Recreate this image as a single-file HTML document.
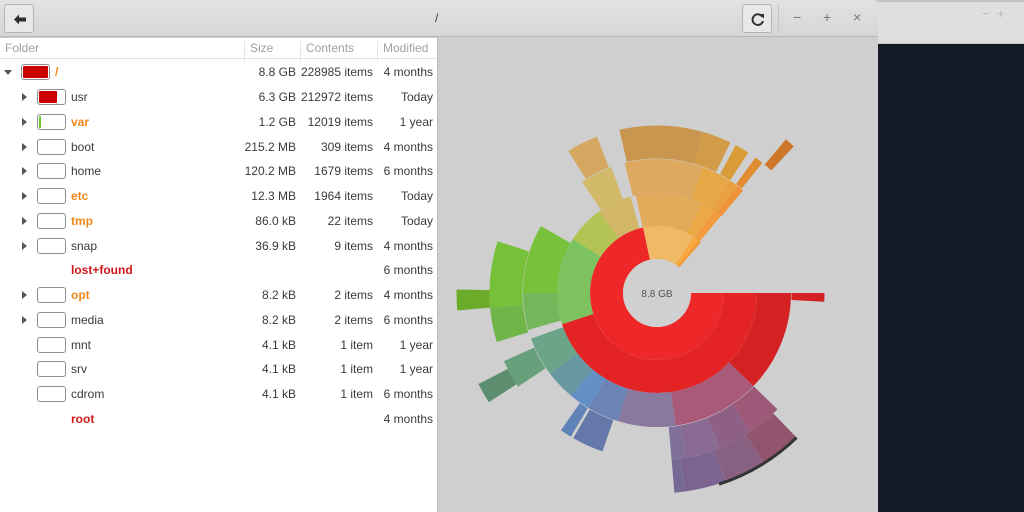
<!DOCTYPE html>
<html><head><meta charset="utf-8"><style>
*{margin:0;padding:0;box-sizing:border-box}
body{width:1024px;height:512px;overflow:hidden;background:#141a26;font-family:"Liberation Sans","DejaVu Sans",sans-serif;position:relative}
#bgwin{position:absolute;left:878px;top:0;width:146px;height:44px;background:#dfdfdf;border-bottom:1px solid #c8c8c8;border-top:2px solid #c4c4c4}
#win{position:absolute;left:0;top:0;width:878px;height:512px;background:#cfcfcf}
#hdr{position:absolute;left:0;top:0;width:878px;height:37px;background:linear-gradient(#e2e2e2,#d6d6d6);border-bottom:1px solid #b8b8b8;border-top-right-radius:6px}
.btn{position:absolute;top:4px;width:30px;height:29px;border:1px solid #b4b4b4;border-radius:3px;background:#e8e8e8}
#left{position:absolute;left:0;top:38px;width:438px;height:474px;background:#fff;border-right:1px solid #bdbdbd}
#th{position:absolute;left:0;top:0;width:437px;height:21px;border-bottom:1px solid #e2e2e2;color:#a0a0a0;font-size:12px}
#th div{position:absolute;top:3px}
.sep{position:absolute;top:0;width:1px;height:21px;background:#e4e4e4}
.row{position:absolute;left:0;width:437px;height:24px;font-size:12px;color:#3a3a3a}
.row span{position:absolute;top:5px;white-space:nowrap}
.tri{position:absolute;width:0;height:0}
.box{position:absolute;top:4px;width:29px;height:16px;border:1px solid #8e8e8e;border-radius:3px;background:#fff;overflow:hidden}
.fill{position:absolute;left:1px;top:1px;bottom:1px;background:#cc0000;border-radius:1px}
.o{color:#f0891a;font-weight:bold}.r{color:#d01818;font-weight:bold}
.s{right:141px}.c{right:64px}.m{right:4px}
</style></head><body>
<div id="bgwin"><span style="position:absolute;left:104px;top:4px;color:#bbb;font-size:13px">−&nbsp;&nbsp;+</span></div>
<div id="win">
<div id="hdr">
 <div class="btn" style="left:4px"><svg width="30" height="29"><path d="M9 14.5 L14 9.5 V12.5 H21 V16.5 H14 V19.5 Z" fill="#2e2e2e"/></svg></div>
 <div style="position:absolute;left:435px;top:11px;font-size:12px;color:#333">/</div>
 <div class="btn" style="left:742px"><svg width="30" height="29"><path d="M19.5 12 A5.3 5.3 0 1 0 20 16" fill="none" stroke="#333" stroke-width="2"/><path d="M16.5 9 L21 9 L21 13.5 Z" fill="#333"/></svg></div>
 <div style="position:absolute;left:778px;top:5px;width:1px;height:28px;background:#c4c4c4"></div>
 <div style="position:absolute;left:793px;top:9px;font-size:14px;color:#777">−</div>
 <div style="position:absolute;left:823px;top:9px;font-size:14px;color:#777">+</div>
 <div style="position:absolute;left:853px;top:9px;font-size:14px;color:#777">×</div>
</div>
<div id="left">
 <div id="th"><div style="left:5px">Folder</div><div class="sep" style="left:244px"></div><div style="left:250px">Size</div><div class="sep" style="left:300px"></div><div style="left:306px">Contents</div><div class="sep" style="left:377px"></div><div style="left:383px">Modified</div></div>
</div>
<div id="rows" style="position:absolute;left:0;top:0"></div>
<svg style="position:absolute;left:438px;top:38px" width="439" height="474" viewBox="438 38 439 474">
<g fill="none" transform="translate(657 293)">
<!-- ring1 -->
<circle r="50.5" stroke-width="33" pathLength="360" stroke="#ee2828" stroke-dasharray="258 360" stroke-dashoffset="0"/>
<circle r="50.5" stroke-width="33" pathLength="360" stroke="#efb966" stroke-dasharray="45 360" stroke-dashoffset="-258"/>
<circle r="50.5" stroke-width="33" pathLength="360" stroke="#f8aa40" stroke-dasharray="5 360" stroke-dashoffset="-303"/>
<circle r="50.5" stroke-width="33" pathLength="360" stroke="#f29a3a" stroke-dasharray="3 360" stroke-dashoffset="-308"/>
<!-- ring2 -->
<circle r="83.5" stroke-width="33" pathLength="360" stroke="#e42424" stroke-dasharray="162 360" stroke-dashoffset="0"/>
<circle r="83.5" stroke-width="33" pathLength="360" stroke="#7cc25f" stroke-dasharray="51 360" stroke-dashoffset="-162"/>
<circle r="83.5" stroke-width="33" pathLength="360" stroke="#b3c455" stroke-dasharray="22 360" stroke-dashoffset="-213"/>
<circle r="83.5" stroke-width="33" pathLength="360" stroke="#d2b768" stroke-dasharray="20 360" stroke-dashoffset="-235"/>
<circle r="83.5" stroke-width="33" pathLength="360" stroke="#e2ab5c" stroke-dasharray="39 360" stroke-dashoffset="-258"/>
<circle r="83.5" stroke-width="33" pathLength="360" stroke="#eba845" stroke-dasharray="8 360" stroke-dashoffset="-297"/>
<circle r="83.5" stroke-width="33" pathLength="360" stroke="#f39a3a" stroke-dasharray="5 360" stroke-dashoffset="-305"/>
<!-- ring3 -->
<circle r="117" stroke-width="34" pathLength="360" stroke="#d42222" stroke-dasharray="44 360" stroke-dashoffset="0"/>
<circle r="117" stroke-width="34" pathLength="360" stroke="#a85a78" stroke-dasharray="38 360" stroke-dashoffset="-44"/>
<circle r="117" stroke-width="34" pathLength="360" stroke="#89799e" stroke-dasharray="25 360" stroke-dashoffset="-82"/>
<circle r="117" stroke-width="34" pathLength="360" stroke="#6c83b5" stroke-dasharray="14 360" stroke-dashoffset="-107"/>
<circle r="117" stroke-width="34" pathLength="360" stroke="#6390c4" stroke-dasharray="9 360" stroke-dashoffset="-121"/>
<circle r="117" stroke-width="34" pathLength="360" stroke="#6998a3" stroke-dasharray="13 360" stroke-dashoffset="-130"/>
<circle r="117" stroke-width="34" pathLength="360" stroke="#6aa58a" stroke-dasharray="17 360" stroke-dashoffset="-143"/>
<circle r="117" stroke-width="34" pathLength="360" stroke="#72b85a" stroke-dasharray="16 360" stroke-dashoffset="-164"/>
<circle r="117" stroke-width="34" pathLength="360" stroke="#78c13a" stroke-dasharray="30 360" stroke-dashoffset="-180"/>
<circle r="117" stroke-width="34" pathLength="360" stroke="#d3b96a" stroke-dasharray="14 360" stroke-dashoffset="-236"/>
<circle r="117" stroke-width="34" pathLength="360" stroke="#dda860" stroke-dasharray="34 360" stroke-dashoffset="-256"/>
<circle r="117" stroke-width="34" pathLength="360" stroke="#e8a848" stroke-dasharray="13 360" stroke-dashoffset="-290"/>
<circle r="117" stroke-width="34" pathLength="360" stroke="#eaa040" stroke-dasharray="4 360" stroke-dashoffset="-303"/>
<circle r="117" stroke-width="34" pathLength="360" stroke="#f09238" stroke-dasharray="3 360" stroke-dashoffset="-307"/>
<!-- ring4 -->
<circle r="151" stroke-width="33" pathLength="360" stroke="#d42222" stroke-dasharray="3 360" stroke-dashoffset="0"/>
<circle r="151" stroke-width="33" pathLength="360" stroke="#9c5a78" stroke-dasharray="12 360" stroke-dashoffset="-44"/>
<circle r="151" stroke-width="33" pathLength="360" stroke="#8e6086" stroke-dasharray="12 360" stroke-dashoffset="-56"/>
<circle r="151" stroke-width="33" pathLength="360" stroke="#886a92" stroke-dasharray="12 360" stroke-dashoffset="-68"/>
<circle r="151" stroke-width="33" pathLength="360" stroke="#7e7098" stroke-dasharray="5 360" stroke-dashoffset="-80"/>
<circle r="151" stroke-width="33" pathLength="360" stroke="#6478aa" stroke-dasharray="11 360" stroke-dashoffset="-109"/>
<circle r="151" stroke-width="33" pathLength="360" stroke="#5f82b8" stroke-dasharray="4 360" stroke-dashoffset="-121"/>
<circle r="151" stroke-width="33" pathLength="360" stroke="#68a07c" stroke-dasharray="10 360" stroke-dashoffset="-146"/>
<circle r="151" stroke-width="33" pathLength="360" stroke="#6fb548" stroke-dasharray="12 360" stroke-dashoffset="-163"/>
<circle r="151" stroke-width="33" pathLength="360" stroke="#76c03a" stroke-dasharray="23 360" stroke-dashoffset="-175"/>
<circle r="151" stroke-width="33" pathLength="360" stroke="#d4a860" stroke-dasharray="11 360" stroke-dashoffset="-238"/>
<circle r="151" stroke-width="33" pathLength="360" stroke="#c99650" stroke-dasharray="29 360" stroke-dashoffset="-257"/>
<circle r="151" stroke-width="33" pathLength="360" stroke="#d29b48" stroke-dasharray="10 360" stroke-dashoffset="-286"/>
<circle r="151" stroke-width="33" pathLength="360" stroke="#d99a38" stroke-dasharray="5 360" stroke-dashoffset="-298"/>
<circle r="151" stroke-width="33" pathLength="360" stroke="#e08c30" stroke-dasharray="3 360" stroke-dashoffset="-306"/>
<!-- ring5 -->
<circle r="184" stroke-width="33" pathLength="360" stroke="#915570" stroke-dasharray="12 360" stroke-dashoffset="-46"/>
<circle r="184" stroke-width="33" pathLength="360" stroke="#876082" stroke-dasharray="12 360" stroke-dashoffset="-58"/>
<circle r="184" stroke-width="33" pathLength="360" stroke="#7c6490" stroke-dasharray="12 360" stroke-dashoffset="-70"/>
<circle r="184" stroke-width="33" pathLength="360" stroke="#756a96" stroke-dasharray="3 360" stroke-dashoffset="-82"/>
<circle r="184" stroke-width="33" pathLength="360" stroke="#5e8e70" stroke-dasharray="6 360" stroke-dashoffset="-147"/>
<circle r="184" stroke-width="33" pathLength="360" stroke="#6aab2a" stroke-dasharray="6 360" stroke-dashoffset="-175"/>
<circle r="184" stroke-width="33" pathLength="360" stroke="#cc7828" stroke-dasharray="3 360" stroke-dashoffset="-310"/>
<circle r="201" stroke-width="3" pathLength="360" stroke="#333" stroke-dasharray="26 360" stroke-dashoffset="-46"/>
</g>
<circle cx="657" cy="293" r="34" fill="#d0d0d0"/>
<text x="657" y="297" font-size="10" fill="#555" text-anchor="middle" font-family="Liberation Sans, sans-serif">8.8 GB</text>
</svg>
</div>
<div style="position:absolute;left:0;top:0;width:438px">
 <div class="row" style="top:60px"><div class="tri" style="left:4px;top:10px;border-left:4px solid transparent;border-right:4px solid transparent;border-top:5px solid #555"></div><div class="box" style="left:21px"><div class="fill" style="right:1px"></div></div><span class="o" style="left:55px">/</span><span class="s">8.8 GB</span><span class="c">228985 items</span><span class="m">4 months</span></div>
</div>
<div id="tbl" style="position:absolute;left:0;top:0;width:438px"></div>
<script>
var d=[["usr","",1,"6.3 GB","212972 items","Today",70,"#cc0000"],["var","o",1,"1.2 GB","12019 items","1 year",8,"#6cc020"],["boot","",1,"215.2 MB","309 items","4 months",0],["home","",1,"120.2 MB","1679 items","6 months",0],["etc","o",1,"12.3 MB","1964 items","Today",0],["tmp","o",1,"86.0 kB","22 items","Today",0],["snap","",1,"36.9 kB","9 items","4 months",0],["lost+found","r",0,"","","6 months",-1],["opt","o",1,"8.2 kB","2 items","4 months",0],["media","",1,"8.2 kB","2 items","6 months",0],["mnt","",0,"4.1 kB","1 item","1 year",0],["srv","",0,"4.1 kB","1 item","1 year",0],["cdrom","",0,"4.1 kB","1 item","6 months",0],["root","r",0,"","","4 months",-1]];
var h="";d.forEach(function(r,i){var t=85+i*24.75;h+='<div class="row" style="top:'+t+'px">';if(r[2])h+='<div class="tri" style="left:22px;top:8px;border-top:4px solid transparent;border-bottom:4px solid transparent;border-left:5px solid #555"></div>';if(r[6]>=0){h+='<div class="box" style="left:37px">';if(r[6]>0)h+='<div class="fill" style="width:'+(r[6]*0.26)+'px;background:'+r[7]+'"></div>';h+='</div>';}h+='<span class="'+r[1]+'" style="left:71px">'+r[0]+'</span><span class="s">'+r[3]+'</span><span class="c">'+r[4]+'</span><span class="m">'+r[5]+'</span></div>';});
document.getElementById("tbl").innerHTML=h;
</script>
</body></html>
